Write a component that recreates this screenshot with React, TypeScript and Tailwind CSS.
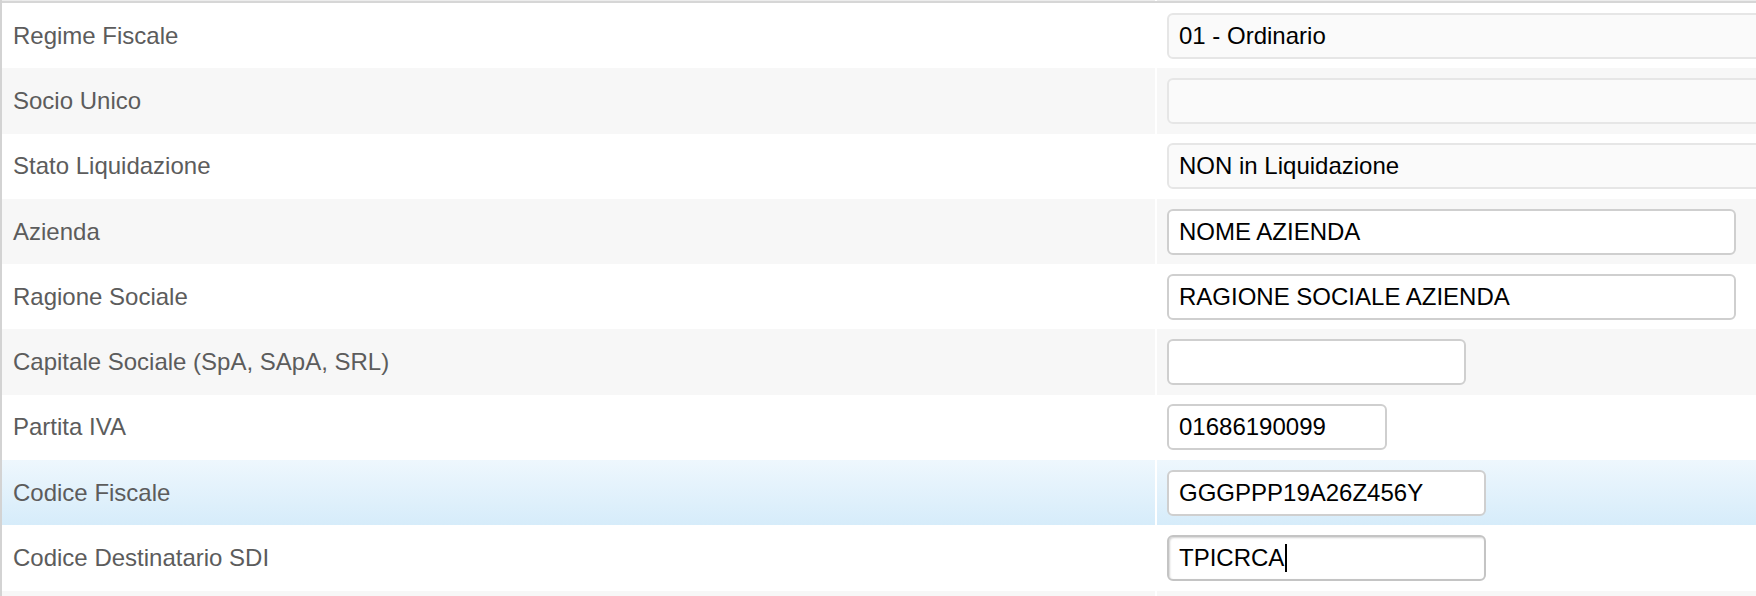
const rows: { label: string; value: string; kind: "select" | "disabled" | "text" | "focus"; width?: string; bg: string }[] = [
  { label: "Regime Fiscale", value: "01 - Ordinario", kind: "select", bg: "bg-white" },
  { label: "Socio Unico", value: "", kind: "disabled", bg: "bg-[#f7f7f7]" },
  { label: "Stato Liquidazione", value: "NON in Liquidazione", kind: "select", bg: "bg-white" },
  { label: "Azienda", value: "NOME AZIENDA", kind: "text", width: "w-[569px]", bg: "bg-[#f7f7f7]" },
  { label: "Ragione Sociale", value: "RAGIONE SOCIALE AZIENDA", kind: "text", width: "w-[569px]", bg: "bg-white" },
  { label: "Capitale Sociale (SpA, SApA, SRL)", value: "", kind: "text", width: "w-[299px]", bg: "bg-[#f7f7f7]" },
  { label: "Partita IVA", value: "01686190099", kind: "text", width: "w-[220px]", bg: "bg-white" },
  { label: "Codice Fiscale", value: "GGGPPP19A26Z456Y", kind: "text", width: "w-[319px]", bg: "bg-gradient-to-b from-[#eef7fd] to-[#d6ecfa]" },
  { label: "Codice Destinatario SDI", value: "TPICRCA", kind: "focus", width: "w-[319px]", bg: "bg-white" },
  { label: "", value: "", kind: "disabled", bg: "bg-[#f7f7f7]" },
];

function Field({ row }: { row: (typeof rows)[number] }) {
  if (row.kind === "select" || row.kind === "disabled") {
    if (!row.label) return null;
    return (
      <div className="h-[46px] w-[640px] shrink-0 rounded-[6px] border-2 border-[#e6e6e6] bg-[#fafafa] px-[10px] flex items-center text-black">
        {row.value}
      </div>
    );
  }
  return (
    <div
      className={`h-[46px] ${row.width} shrink-0 rounded-[6px] border-2 bg-white px-[10px] flex items-center text-black ${
        row.kind === "focus" ? "border-[#c4c4c4] shadow-[inset_1px_1px_2px_rgba(0,0,0,0.18)]" : "border-[#cfcfcf]"
      }`}
    >
      {row.value}
      {row.kind === "focus" && <span className="ml-[1px] inline-block h-[28px] w-[2px] bg-black" />}
    </div>
  );
}

export default function App() {
  return (
    <div
      className="h-[596px] w-[1756px] overflow-hidden bg-white border-l-2 border-[#d3d3d3] text-[24px]"
      style={{ fontFamily: '"Liberation Sans", Arial, Helvetica, sans-serif' }}
    >
      <div className="flex h-[1px] gap-[2px] bg-white">
        <div className="w-[1153px] bg-[#ececec]" />
        <div className="flex-1 bg-[#ececec]" />
      </div>
      <div className="h-[2px] bg-[#d6d6d6]" />
      {rows.map((row, i) => (
        <div key={i} className="flex h-[65.3px] gap-[2px] bg-white">
          <div className={`w-[1153px] shrink-0 flex items-center pl-[11px] text-[#5c5c5c] ${row.bg}`}>{row.label}</div>
          <div className={`flex-1 min-w-0 overflow-hidden flex items-center pl-[10px] ${row.bg}`}>
            <Field row={row} />
          </div>
        </div>
      ))}
    </div>
  );
}
